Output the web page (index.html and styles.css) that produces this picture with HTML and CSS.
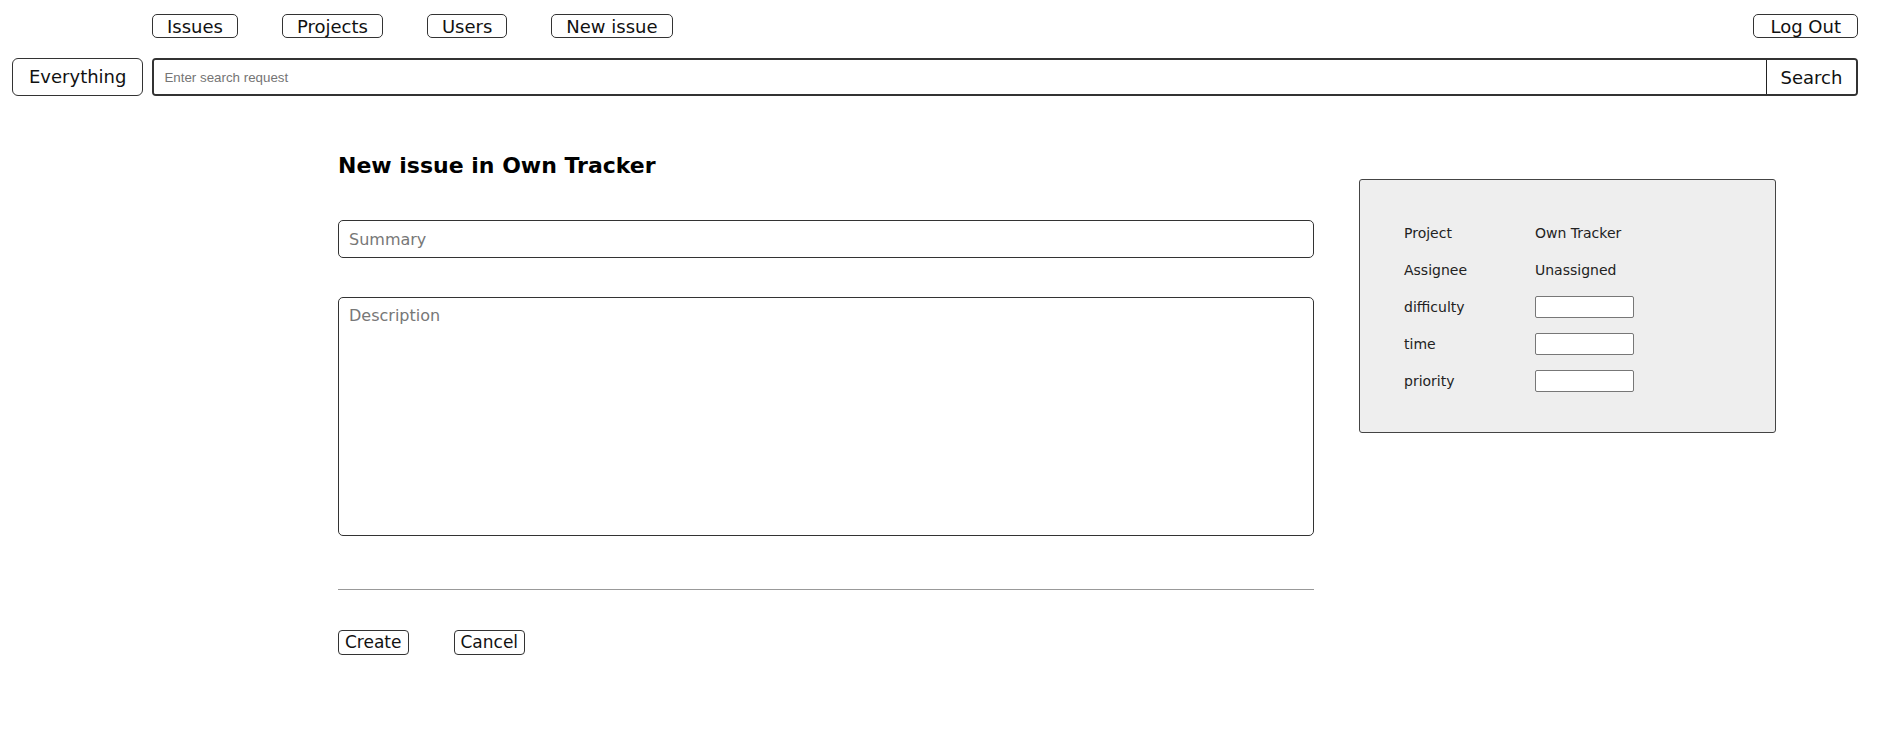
FILE: index.html
```html
<!DOCTYPE html>
<html>
<head>
<meta charset="utf-8">
<link rel="stylesheet" href="styles.css">
</head>
<body>
<header class="top">
  <nav class="nav">
    <div class="nav-links">
      <button class="btn">Issues</button>
      <button class="btn">Projects</button>
      <button class="btn">Users</button>
      <button class="btn">New issue</button>
    </div>
    <button class="btn logout">Log Out</button>
  </nav>
  <div class="search-row">
    <button class="scope">Everything</button>
    <div class="search">
      <input class="search-input" type="text" placeholder="Enter search request">
      <button class="search-btn">Search</button>
    </div>
  </div>
</header>
<main class="main">
  <section class="form">
    <h2 class="title">New issue in Own Tracker</h2>
    <input class="field summary" type="text" placeholder="Summary">
    <textarea class="field desc" placeholder="Description"></textarea>
    <hr class="sep">
    <div class="actions">
      <button class="act">Create</button>
      <button class="act">Cancel</button>
    </div>
  </section>
  <aside class="panel">
    <div class="props">
      <span class="lbl">Project</span><span class="val">Own Tracker</span>
      <span class="lbl">Assignee</span><span class="val">Unassigned</span>
      <span class="lbl">difficulty</span><input class="small" type="text">
      <span class="lbl">time</span><input class="small" type="text">
      <span class="lbl">priority</span><input class="small" type="text">
    </div>
  </aside>
</main>
</body>
</html>
```
FILE: styles.css
```css
* { box-sizing: border-box; }
body {
  margin: 0;
  font-family: "DejaVu Sans", sans-serif;
  color: #111;
  background: #fff;
}
button { font-family: inherit; color: #111; cursor: pointer; }

.top {
  padding: 14px 39px 0 12px;
}
.nav {
  display: flex;
  justify-content: space-between;
  align-items: center;
  margin-left: 140px;
}
.nav-links {
  display: flex;
  gap: 44px;
}
.btn {
  font-size: 18px;
  line-height: 21px;
  height: 24px;
  padding: 0 14px;
  background: #fff;
  border: 1px solid #333;
  border-radius: 5px;
}
.logout { padding: 0 16px; }
.search-row {
  display: flex;
  gap: 9px;
  margin-top: 20px;
}
.scope {
  font-size: 18px;
  line-height: 22px;
  height: 38px;
  padding: 0 16px;
  background: #fff;
  border: 1px solid #333;
  border-radius: 6px;
}
.search {
  flex: 1;
  display: flex;
  height: 38px;
  border: 2px solid #333;
  border-radius: 4px;
  overflow: hidden;
}
.search-input {
  flex: 1;
  border: none;
  outline: none;
  padding: 0 10px;
  font-family: "Liberation Sans", Arial, sans-serif;
  font-size: 13.33px;
}
.search-input::placeholder { color: #757575; }
.search-btn {
  width: 90px;
  border: none;
  border-left: 1px solid #222;
  background: #fff;
  font-size: 18px;
  padding: 0;
}

.main {
  display: flex;
  align-items: flex-start;
  gap: 45px;
  padding: 0 0 0 338px;
}
.form {
  width: 976px;
  display: flex;
  flex-direction: column;
}
.title {
  margin: 57px 0 0;
  font-size: 22px;
  line-height: 26px;
  font-weight: bold;
  color: #000;
}
.field {
  font-family: inherit;
  font-size: 16px;
  border: 1px solid #333;
  border-radius: 5px;
  padding: 0 10px;
  color: #111;
  outline: none;
}
.field::placeholder { color: #777; }
.summary {
  height: 38px;
  margin-top: 41px;
}
.desc {
  height: 239px;
  margin-top: 39px;
  padding-top: 8px;
  resize: none;
}
.sep {
  margin: 53px 0 0;
  border: none;
  border-top: 1px solid #999;
  height: 0;
}
.actions {
  display: flex;
  gap: 45px;
  margin-top: 40px;
}
.act {
  font-size: 17px;
  line-height: 23px;
  height: 25px;
  padding: 0 6px;
  background: #fff;
  border: 1px solid #333;
  border-radius: 4px;
}

.panel {
  margin-top: 83px;
  width: 417px;
  height: 254px;
  background: #eee;
  border: 1px solid #444;
  border-radius: 3px;
  padding: 42px 0 0 44px;
}
.props {
  display: grid;
  grid-template-columns: 131px 99px;
  grid-auto-rows: 22px;
  row-gap: 15px;
  align-items: center;
  font-size: 14px;
  color: #222;
}
.small {
  width: 99px;
  height: 22px;
  border: 1px solid #777;
  border-radius: 2px;
  background: #fff;
}
```
